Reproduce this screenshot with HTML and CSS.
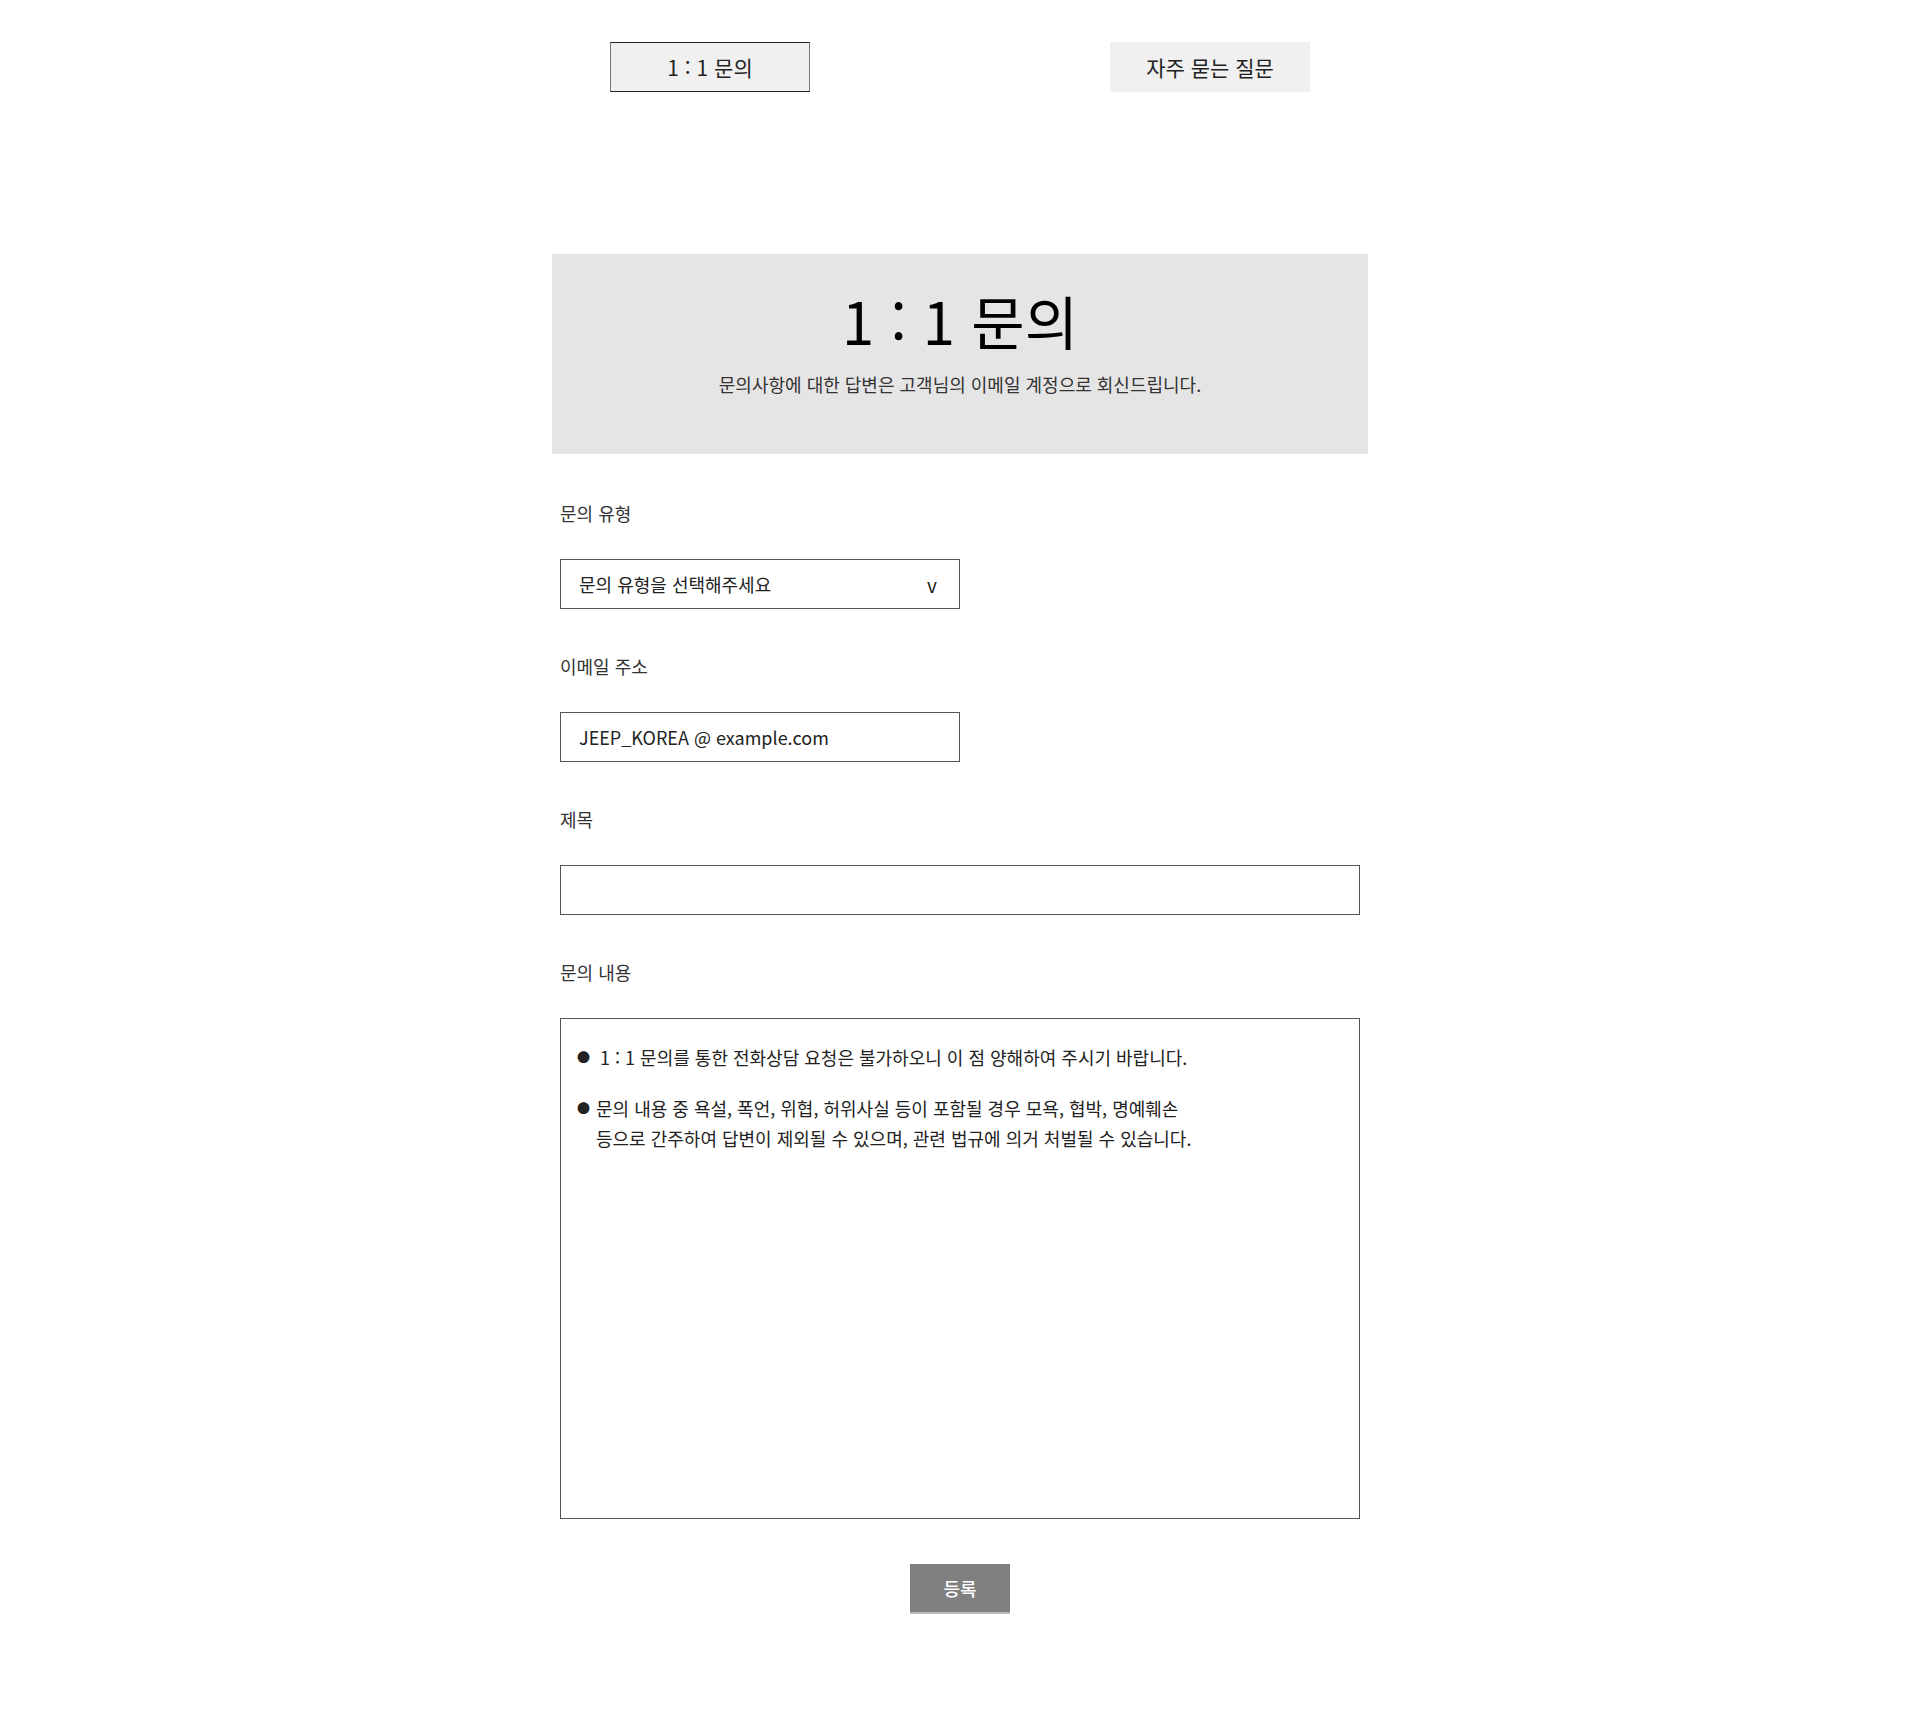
FILE: index.html
```html
<!DOCTYPE html>
<html lang="ko">
<head>
<meta charset="utf-8">
<title>1 : 1 문의</title>
<link rel="stylesheet" href="styles.css">
</head>
<body>
<nav class="tabs">
  <a class="tab tab-active">1 : 1 문의</a>
  <a class="tab">자주 묻는 질문</a>
</nav>
<main class="page">
  <section class="hero">
    <h1 class="hero-title">1 : 1 문의</h1>
    <p class="hero-sub">문의사항에 대한 답변은 고객님의 이메일 계정으로 회신드립니다.</p>
  </section>
  <form class="form">
    <div class="field">
      <label class="label">문의 유형</label>
      <div class="box box-half select"><span>문의 유형을 선택해주세요</span><span class="caret">v</span></div>
    </div>
    <div class="field">
      <label class="label">이메일 주소</label>
      <div class="box box-half">JEEP_KOREA @ example.com</div>
    </div>
    <div class="field">
      <label class="label">제목</label>
      <div class="box"></div>
    </div>
    <div class="field">
      <label class="label">문의 내용</label>
      <div class="box area">
        <div class="note"><span class="dot">●</span><span class="note-text first">1 : 1 문의를 통한 전화상담 요청은 불가하오니 이 점 양해하여 주시기 바랍니다.</span></div>
        <div class="note"><span class="dot">●</span><span class="note-text">문의 내용 중 욕설, 폭언, 위협, 허위사실 등이 포함될 경우 모욕, 협박, 명예훼손<br>등으로 간주하여 답변이 제외될 수 있으며, 관련 법규에 의거 처벌될 수 있습니다.</span></div>
      </div>
    </div>
    <div class="actions">
      <button type="button" class="submit">등록</button>
    </div>
  </form>
</main>
</body>
</html>
```
FILE: styles.css
```css
* { box-sizing: border-box; }
html, body { margin: 0; padding: 0; background: #fff; }
body {
  font-family: "Noto Sans CJK KR", "Noto Sans", sans-serif;
  color: #222;
}
.tabs {
  display: flex;
  justify-content: center;
  gap: 300px;
  padding-top: 42px;
}
.tab {
  width: 200px;
  height: 50px;
  display: flex;
  align-items: center;
  justify-content: center;
  background: #f0f0f0;
  font-size: 21px;
  color: #222;
}
.tab-active {
  border: 1px solid #222;
  border-left-color: #777;
  border-right-color: #777;
}
.page {
  width: 816px;
  margin: 162px auto 0;
  padding-bottom: 95px;
}
.hero {
  height: 200px;
  background: #e5e5e5;
  text-align: center;
  padding-top: 31px;
}
.hero-title {
  margin: 0;
  font-size: 58px;
  font-weight: 400;
  line-height: 70px;
  color: #000;
}
.hero-sub {
  margin: 17px 0 0;
  font-size: 18px;
  line-height: 24px;
  color: #333;
}
.form {
  padding: 47px 8px 0;
}
.field {
  margin-bottom: 45px;
}
.field:last-of-type { margin-bottom: 41px; }
.label {
  display: block;
  font-size: 18px;
  line-height: 24px;
  color: #333;
  margin-bottom: 34px;
}
.box {
  height: 50px;
  border: 1px solid #555;
  display: flex;
  align-items: center;
  padding: 0 18px;
  font-size: 18px;
  color: #222;
}
.box-half { width: 400px; }
.select { justify-content: space-between; }
.caret { font-size: 19px; margin-right: 4px; }
.area {
  height: 501px;
  display: block;
  padding: 23px 16px;
}
.note {
  display: flex;
  align-items: flex-start;
  font-size: 18px;
  line-height: 30px;
  color: #222;
  margin-bottom: 21px;
}
.dot {
  font-size: 13px;
  width: 19px;
  flex: none;
  line-height: 30px;
}
.note-text.first { padding-left: 4px; }
.actions {
  display: flex;
  justify-content: center;
}
.submit {
  width: 100px;
  height: 50px;
  background: #808080;
  color: #fff;
  border: none;
  border-bottom: 2px solid #bbb;
  font-family: inherit;
  font-size: 18px;
  font-weight: 500;
  padding: 0;
}
```
